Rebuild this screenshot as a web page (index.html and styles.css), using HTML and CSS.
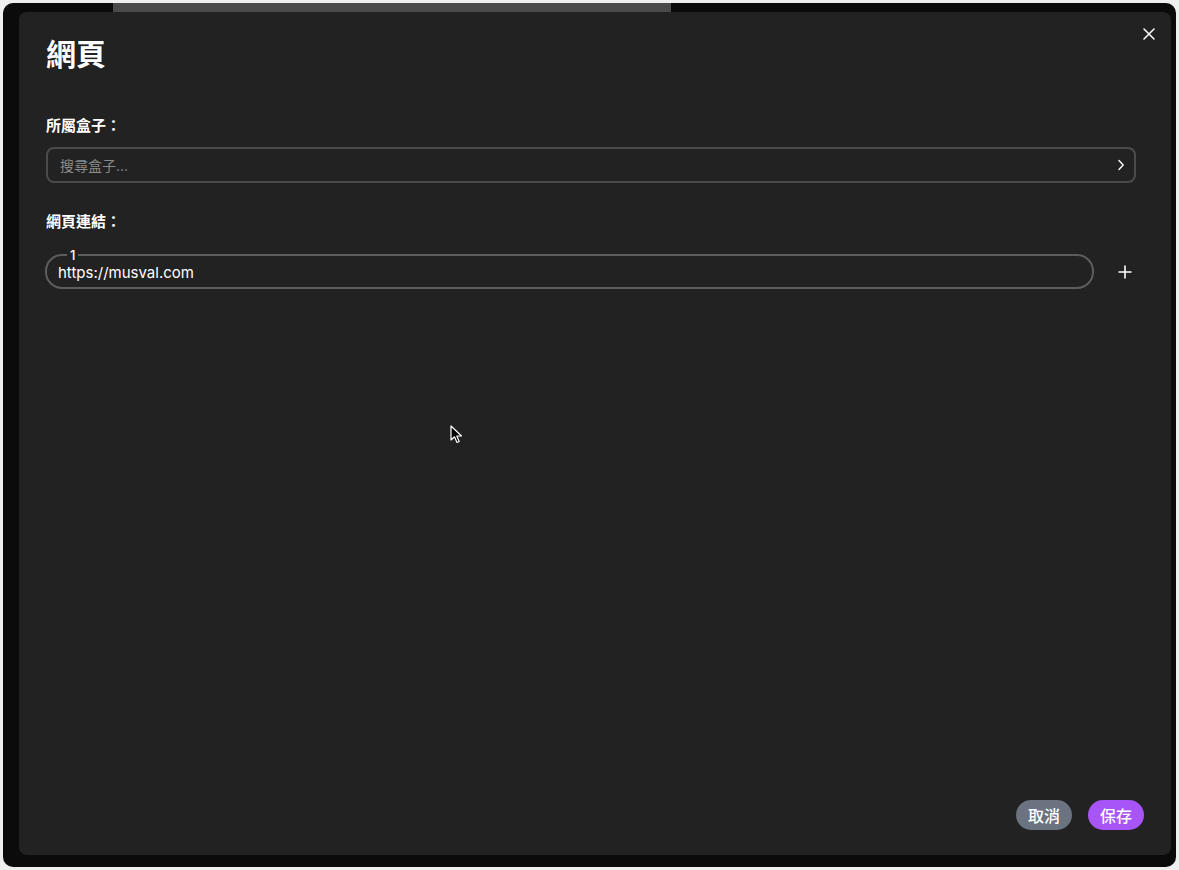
FILE: index.html
```html
<!DOCTYPE html>
<html lang="zh-Hant">
<head>
  <meta charset="UTF-8">
  <title>網頁</title>
  <link rel="stylesheet" href="styles.css">
</head>
<body>

<div class="window">
  <div class="behind-bar"></div>

  <div class="modal">
    <button class="close-btn" type="button" aria-label="close">
      <svg width="12" height="12" viewBox="0 0 12 12"><path d="M1 1L11 11M11 1L1 11" stroke="#fff" stroke-width="1.5" stroke-linecap="round"/></svg>
    </button>

    <div class="modal-body">
      <h2>網頁</h2>

      <div class="form-group">
        <label class="field-label">所屬盒子：</label>
        <div class="select-box">
          <input type="text" placeholder="搜尋盒子...">
          <svg width="8" height="12" viewBox="0 0 8 12"><path d="M2 1.5L6.2 6L2 10.5" fill="none" stroke="#fff" stroke-width="1.4" stroke-linecap="round" stroke-linejoin="round"/></svg>
        </div>
      </div>

      <div class="form-group">
        <label class="field-label links">網頁連結：</label>
        <div class="link-row">
          <fieldset class="link-field">
            <legend>1</legend>
            <input type="text" value="https://musval.com">
          </fieldset>
          <button class="add-btn" type="button" aria-label="add">
            <svg width="14" height="14" viewBox="0 0 14 14"><path d="M7 0.5V13.5M0.5 7H13.5" stroke="#fff" stroke-width="1.6"/></svg>
          </button>
        </div>
      </div>
    </div>

    <div class="modal-footer">
      <button class="btn btn-cancel" type="button">取消</button>
      <button class="btn btn-save" type="button">保存</button>
    </div>
  </div>
</div>

<!-- mouse pointer in the shot -->
<svg class="pointer" width="14" height="20" viewBox="0 0 14 20">
  <path d="M1 1V15L4.5 11.8L7 17.5L9.2 16.5L6.8 11H11.5Z" fill="#000" stroke="#fff" stroke-width="1.2" stroke-linejoin="round"/>
</svg>

</body>
</html>
```

FILE: styles.css
```css
body {
  margin: 0;
  background: #efefef;
  font-family: Inter, "Noto Sans CJK TC", sans-serif;
  color: #fff;
}
.window {
  margin: 3px;
  height: 864px;
  box-sizing: border-box;
  background: #0b0b0b;
  border-radius: 10px;
  padding: 0 5px 12px 16px;
  display: flex;
  flex-direction: column;
}
.behind-bar {
  height: 9px;
  width: 558px;
  margin-left: 94px;
  background: #4a4a4a;
  flex-shrink: 0;
}
.modal {
  position: relative;
  flex: 1;
  background: #222;
  border-radius: 8px;
  padding: 24px 27px 25px 27px;
  display: flex;
  flex-direction: column;
}
.modal-body {
  flex: 1;
  padding-right: 8px;
}
.modal h2 {
  margin: 0;
  font-size: 30px;
  line-height: 36px;
  font-weight: 700;
}
.close-btn {
  position: absolute;
  top: 16px;
  right: 16px;
  background: none;
  border: none;
  padding: 0;
  width: 12px;
  height: 12px;
  cursor: pointer;
}
.close-btn svg {
  display: block;
}
.form-group {
  margin-top: 44px;
}
.form-group + .form-group {
  margin-top: 29px;
}
.field-label {
  display: block;
  font-size: 15px;
  line-height: 20px;
  font-weight: 700;
  margin-bottom: 11px;
}
.field-label.links {
  margin-bottom: 17px;
}
.select-box {
  display: flex;
  align-items: center;
  height: 36px;
  box-sizing: border-box;
  border: 2px solid #4b4b4b;
  border-radius: 8px;
  padding: 0 9px 0 12px;
}
.select-box input {
  flex: 1;
  background: none;
  border: none;
  outline: none;
  color: #fff;
  font-family: inherit;
  font-size: 14px;
  padding: 0;
}
.select-box input::placeholder {
  color: #8a8a8a;
}
.link-row {
  display: flex;
  align-items: center;
  gap: 20px;
}
.link-field {
  flex: 1;
  margin: 0 0 0 -1px;
  padding: 0 11px 2px;
  border: 2px solid #5d5d5d;
  border-radius: 17px;
  min-width: 0;
}
.link-field legend {
  font-size: 13px;
  line-height: 12px;
  font-weight: 500;
  padding: 0 3px;
  margin-left: 9px;
  color: #fff;
}
.link-field input {
  display: block;
  width: 100%;
  background: none;
  border: none;
  outline: none;
  color: #fff;
  font-family: inherit;
  font-size: 15px;
  line-height: 24px;
  height: 24px;
  padding: 0;
}
.add-btn {
  width: 22px;
  height: 22px;
  background: none;
  border: none;
  padding: 0;
  display: flex;
  align-items: center;
  justify-content: center;
  margin-top: 6px;
}
.modal-footer {
  display: flex;
  justify-content: flex-end;
  gap: 16px;
}
.btn {
  height: 30px;
  padding: 0 12px;
  border: none;
  border-radius: 15px;
  color: #fff;
  font-family: inherit;
  font-size: 16px;
  font-weight: 500;
  cursor: pointer;
}
.btn-cancel {
  background: #6b7280;
}
.btn-save {
  background: #a855f7;
}
.pointer {
  position: absolute;
  left: 450px;
  top: 425px;
}
```
